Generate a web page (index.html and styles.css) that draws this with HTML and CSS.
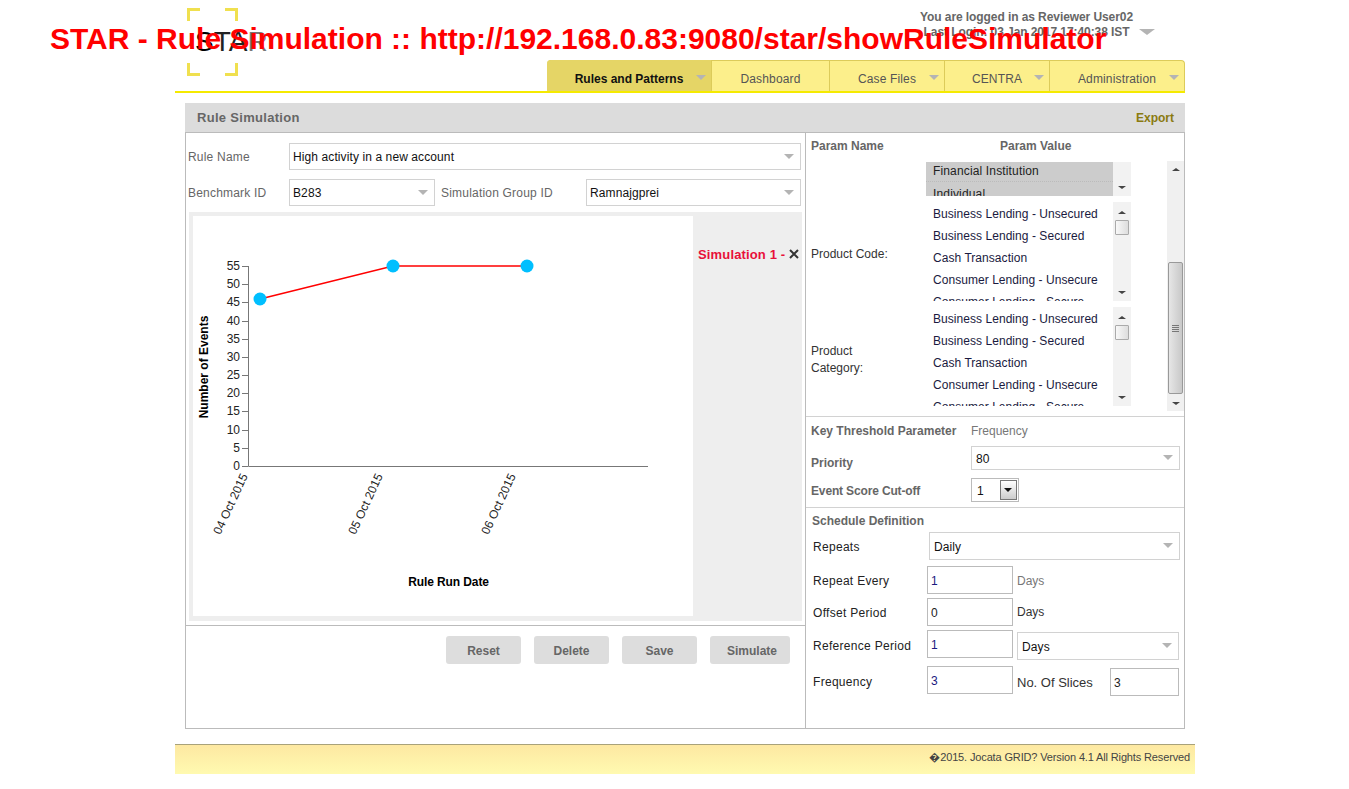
FILE: index.html
```html
<!DOCTYPE html>
<html lang="en">
<head>
<meta charset="UTF-8">
<meta name="viewport" content="width=device-width, initial-scale=1.0">
<title>STAR - Rule Simulation</title>
<link rel="stylesheet" href="styles.css">
</head>
<body>
<h1 class="page-url">STAR - Rule Simulation :: http://192.168.0.83:9080/star/showRuleSimulator</h1>
<div class="page">
  <header class="header">
    <div class="logo"><span class="logo-s">S</span>TA<span class="logo-r">R</span>
      <i class="corner tl"></i><i class="corner tr"></i><i class="corner bl"></i><i class="corner br"></i>
    </div>
    <div class="header-right">
      <div class="user-box">
        <div class="user-info">
          <div>You are logged in as Reviewer User02</div>
          <div class="last-login">Last Login: 03 Jan 2017 17:40:38 IST</div>
        </div>
        <span class="caret caret-big"></span>
      </div>
      <nav class="nav">
        <a class="tab tab-rules active">Rules and Patterns<span class="caret"></span></a>
        <a class="tab tab-dash">Dashboard</a>
        <a class="tab tab-case">Case Files<span class="caret"></span></a>
        <a class="tab tab-centra">CENTRA<span class="caret"></span></a>
        <a class="tab tab-admin">Administration<span class="caret"></span></a>
      </nav>
    </div>
  </header>

  <main class="panel">
    <div class="panel-title">
      <span class="panel-name">Rule Simulation</span>
      <a class="export">Export</a>
    </div>
    <div class="panel-body">
      <section class="left">
        <div class="form-row row-rule">
          <label class="lbl lbl-rule">Rule Name</label>
          <div class="select grow">High activity in a new account<span class="caret"></span></div>
        </div>
        <div class="form-row row-bench">
          <label class="lbl lbl-rule">Benchmark ID</label>
          <div class="select sel-bench">B283<span class="caret"></span></div>
          <label class="lbl lbl-group">Simulation Group ID</label>
          <div class="select grow">Ramnajgprei<span class="caret"></span></div>
        </div>
        <div class="chart-frame">
          <div class="chart">
            <svg width="500" height="400" viewBox="193 216 500 400">
              <g class="axis">
                <path d="M248.5 266V466.5H648"/>
                <path d="M242 266.5h6M242 284.5h6M242 302.5h6M242 321.5h6M242 339.5h6M242 357.5h6M242 375.5h6M242 393.5h6M242 411.5h6M242 430.5h6M242 448.5h6M242 466.5h6"/>
              </g>
              <g class="tick-labels">
                <text x="240" y="270">55</text>
                <text x="240" y="288">50</text>
                <text x="240" y="306">45</text>
                <text x="240" y="325">40</text>
                <text x="240" y="343">35</text>
                <text x="240" y="361">30</text>
                <text x="240" y="379">25</text>
                <text x="240" y="397">20</text>
                <text x="240" y="415">15</text>
                <text x="240" y="434">10</text>
                <text x="240" y="452">5</text>
                <text x="240" y="470">0</text>
              </g>
              <g class="date-labels">
                <text transform="translate(248 476) rotate(-65)">04 Oct 2015</text>
                <text transform="translate(383 476) rotate(-65)">05 Oct 2015</text>
                <text transform="translate(516 476) rotate(-65)">06 Oct 2015</text>
              </g>
              <text class="axis-title" transform="translate(208 367) rotate(-90)">Number of Events</text>
              <text class="axis-title title-x" x="448.5" y="586">Rule Run Date</text>
              <polyline class="series" points="260,299 393,266 527,266"/>
              <circle class="point" cx="260" cy="299" r="6.5"/>
              <circle class="point" cx="393" cy="266" r="6.5"/>
              <circle class="point" cx="527" cy="266" r="6.5"/>
            </svg>
          </div>
          <div class="legend">
            <span class="legend-name">Simulation 1 -</span>
            <svg class="legend-x" width="10" height="10" viewBox="0 0 10 10"><path d="M1 1l8 8M9 1l-8 8"/></svg>
          </div>
        </div>
        <div class="actions">
          <button class="btn">Reset</button>
          <button class="btn">Delete</button>
          <button class="btn">Save</button>
          <button class="btn btn-wide">Simulate</button>
        </div>
      </section>

      <section class="right">
        <div class="param-head">
          <span class="param-name">Param Name</span>
          <span>Param Value</span>
        </div>
        <div class="param-scroll">
          <div class="param-rows">
            <div class="param-row first">
              <div class="listbox short">
                <ul class="options">
                  <li class="selected">Financial Institution</li>
                  <li class="selected">Individual</li>
                </ul>
                <div class="sb plain"><span></span><span class="down"></span></div>
              </div>
            </div>
            <div class="param-row">
              <label class="param-label">Product Code:</label>
              <div class="listbox">
                <ul class="options">
                  <li>Business Lending - Unsecured</li>
                  <li>Business Lending - Secured</li>
                  <li>Cash Transaction</li>
                  <li>Consumer Lending - Unsecure</li>
                  <li>Consumer Lending - Secure</li>
                </ul>
                <div class="sb"><span class="up"></span><b class="thumb"></b><span class="down"></span></div>
              </div>
            </div>
            <div class="param-row">
              <label class="param-label">Product<br>Category:</label>
              <div class="listbox">
                <ul class="options">
                  <li>Business Lending - Unsecured</li>
                  <li>Business Lending - Secured</li>
                  <li>Cash Transaction</li>
                  <li>Consumer Lending - Unsecure</li>
                  <li>Consumer Lending - Secure</li>
                </ul>
                <div class="sb"><span class="up"></span><b class="thumb"></b><span class="down"></span></div>
              </div>
            </div>
          </div>
          <div class="outer-sb">
            <span class="up"></span>
            <div class="outer-track"><b class="outer-thumb"><i></i></b></div>
            <span class="down"></span>
          </div>
        </div>

        <div class="threshold">
          <div class="t-row t-key"><span class="t-label">Key Threshold Parameter</span><span class="t-value">Frequency</span></div>
          <div class="t-row t-priority"><span class="t-label">Priority</span><div class="select sel-priority">80<span class="caret"></span></div></div>
          <div class="t-row t-score"><span class="t-label">Event Score Cut-off</span>
            <div class="old-select">1<span class="old-btn"></span></div>
          </div>
        </div>

        <div class="schedule">
          <h3 class="sched-title">Schedule Definition</h3>
          <div class="s-row s-repeats"><label class="s-label">Repeats</label><div class="select sel-repeats">Daily<span class="caret"></span></div></div>
          <div class="s-row s-every"><label class="s-label">Repeat Every</label><input class="num" value="1"><span class="unit muted">Days</span></div>
          <div class="s-row s-offset"><label class="s-label">Offset Period</label><input class="num plain-num" value="0"><span class="unit">Days</span></div>
          <div class="s-row s-ref"><label class="s-label">Reference Period</label><input class="num" value="1"><div class="select sel-days">Days<span class="caret"></span></div></div>
          <div class="s-row s-freq"><label class="s-label">Frequency</label><input class="num" value="3"><span class="unit slices">No. Of Slices</span><input class="num num-slices" value="3"></div>
        </div>
      </section>
    </div>
  </main>

  <footer class="footer">&#65533;2015. Jocata GRID? Version 4.1 All Rights Reserved</footer>
</div>
</body>
</html>
```

FILE: styles.css
```css
* {
  box-sizing: border-box;
}
body {
  margin: 0;
  background: #fff;
  color: #333;
  font-family: "Liberation Sans", Arial, sans-serif;
  font-size: 12px;
}
ul {
  margin: 0;
  padding: 0;
  list-style: none;
}
.page-url {
  position: absolute;
  left: 50px;
  top: 20px;
  z-index: 10;
  margin: 0;
  color: #f00;
  font-size: 30px;
  line-height: 38px;
  font-weight: bold;
  white-space: nowrap;
}
.page {
  width: 1020px;
  margin-left: 175px;
}

/* header */
.header {
  display: flex;
  width: 1010px;
  height: 93px;
  border-bottom: 2px solid #f5ea00;
}
.logo {
  position: relative;
  width: 51px;
  height: 68px;
  margin: 8px 0 0 12px;
  padding: 19px 0 0 8px;
  color: #222;
  font-size: 28px;
  font-weight: normal;
  line-height: 30px;
  white-space: nowrap;
}
.logo-s {
  color: #000;
}
.logo-r {
  color: #777;
}
.corner {
  position: absolute;
  width: 13px;
  height: 13px;
  border: 0 solid #f0e04f;
}
.tl { left: 0; top: 0; border-width: 3px 0 0 3px; }
.tr { right: 0; top: 0; border-width: 3px 3px 0 0; }
.bl { left: 0; bottom: 0; border-width: 0 0 3px 3px; }
.br { right: 0; bottom: 0; border-width: 0 3px 3px 0; }
.header-right {
  display: flex;
  flex-direction: column;
  flex: 1;
  align-items: flex-end;
}
.user-box {
  display: flex;
  align-items: flex-start;
  height: 60px;
  padding: 10px 30px 0 0;
}
.user-info {
  color: #666;
  font-weight: bold;
  letter-spacing: -.08px;
  line-height: 15px;
  text-align: center;
}
.caret {
  position: absolute;
  right: 5px;
  top: 50%;
  margin-top: -3px;
  border-style: solid;
  border-width: 5px 5px 0;
  border-color: #b4b4b4 transparent transparent;
}
.caret-big {
  position: static;
  margin: 19px 0 0 6px;
  border-width: 6px 8px 0;
}
.nav {
  display: flex;
  height: 31px;
  border: 1px solid #dccb5a;
  border-bottom: 0;
  border-left: 0;
  border-radius: 4px 4px 0 0;
  background: #fcef8b;
  color: #555;
  line-height: 39px;
  letter-spacing: .15px;
}
.tab {
  position: relative;
  display: block;
  margin-top: -1px;
  border-right: 1px solid #dccb5a;
  text-align: center;
}
.tab:last-child {
  border-right: 0;
}
.tab .caret {
  right: 5px;
  margin-top: -1px;
}
.active {
  border-radius: 4px 0 0 0;
  background: #e5d566;
  color: #111;
  font-weight: bold;
  letter-spacing: 0;
}
.tab-rules { width: 165px; }
.tab-dash { width: 118px; }
.tab-case { width: 115px; }
.tab-centra { width: 105px; }
.tab-admin { width: 134px; }

/* main panel */
.panel {
  width: 1000px;
  margin: 10px 0 0 10px;
}
.panel-title {
  display: flex;
  justify-content: space-between;
  align-items: center;
  height: 30px;
  padding: 0 11px 0 12px;
  border-bottom: 1px solid #bbb;
  background: #dcdcdc;
}
.panel-name {
  color: #666;
  font-size: 13px;
  font-weight: bold;
  letter-spacing: .3px;
}
.export {
  color: #8a7a10;
  font-weight: bold;
}
.panel-body {
  display: flex;
  height: 596px;
  border: 1px solid #bbb;
  border-top: 0;
}
.left {
  width: 620px;
  border-right: 1px solid #bbb;
}
.right {
  width: 378px;
}
.form-row {
  display: flex;
  align-items: center;
  height: 27px;
  margin-right: 4px;
  padding-left: 2px;
}
.row-rule {
  margin-top: 10px;
}
.row-bench {
  margin-top: 9px;
}
.lbl {
  color: #666;
  letter-spacing: .2px;
}
.lbl-rule {
  width: 101px;
  flex: none;
}
.lbl-group {
  width: 151px;
  flex: none;
  padding-left: 6px;
}
.select {
  position: relative;
  height: 27px;
  padding-left: 3px;
  border: 1px solid #d2d2d2;
  background: #fff;
  color: #111;
  line-height: 27px;
  letter-spacing: .1px;
}
.select .caret {
  right: 6px;
}
.grow {
  flex: 1;
}
.sel-bench {
  width: 146px;
  flex: none;
}

/* chart */
.chart-frame {
  display: flex;
  height: 409px;
  margin: 6px 3px 0 3px;
  padding: 4px 0 5px 4px;
  background: #eee;
}
.chart {
  width: 500px;
  height: 400px;
  background: #fff;
}
.chart svg {
  display: block;
}
.axis path {
  fill: none;
  stroke: #777;
  stroke-width: 1;
}
.tick-labels text {
  fill: #222;
  font-size: 12px;
  text-anchor: end;
}
.date-labels text {
  fill: #222;
  font-size: 12px;
  text-anchor: end;
}
.axis-title {
  fill: #000;
  font-size: 12px;
  font-weight: bold;
  text-anchor: middle;
}
.title-x {
  letter-spacing: -.1px;
}
.series {
  fill: none;
  stroke: #f00;
  stroke-width: 1.5;
}
.point {
  fill: #00bfff;
}
.legend {
  display: flex;
  flex: 1;
  align-items: center;
  height: 20px;
  margin-top: 28px;
  padding-left: 5px;
}
.legend-name {
  color: #e8103a;
  font-size: 13px;
  font-weight: bold;
  letter-spacing: .15px;
  white-space: nowrap;
}
.legend-x {
  margin-left: 4px;
}
.legend-x path {
  fill: none;
  stroke: #333;
  stroke-width: 2;
}
.actions {
  display: flex;
  justify-content: flex-end;
  gap: 13px;
  margin-top: 4px;
  padding: 10px 15px 0 0;
  border-top: 1px solid #bbb;
}
.btn {
  width: 75px;
  height: 28px;
  padding: 2px 0 0;
  border: 0;
  border-radius: 3px;
  background: #ddd;
  color: #666;
  font-family: inherit;
  font-size: 12px;
  font-weight: bold;
}
.btn-wide {
  width: 80px;
  padding-left: 4px;
}

/* param lists */
.param-head {
  display: flex;
  height: 28px;
  padding: 6px 0 0 5px;
  color: #666;
  font-weight: bold;
  line-height: 14px;
}
.param-name {
  width: 189px;
}
.param-scroll {
  display: flex;
  height: 251px;
  padding-bottom: 1px;
}
.param-rows {
  width: 361px;
  flex: none;
}
.param-row {
  display: flex;
  align-items: center;
  margin-top: 6px;
  padding-left: 5px;
}
.param-row.first {
  margin-top: 1px;
  padding-left: 120px;
}
.param-label {
  width: 115px;
  flex: none;
  padding-top: 6px;
  color: #333;
  line-height: 17px;
}
.listbox {
  display: flex;
  width: 205px;
  height: 99px;
  overflow: hidden;
  background: #fff;
}
.listbox.short {
  height: 34px;
}
.options {
  flex: 1;
  padding-top: 1px;
  overflow: hidden;
}
.options li {
  height: 22px;
  padding-left: 7px;
  color: #1a1a40;
  line-height: 22px;
  letter-spacing: .05px;
  white-space: nowrap;
  overflow: hidden;
}
.short .options {
  padding-top: 0;
}
.options .selected {
  height: 20px;
  background: #ccc;
  color: #222;
  letter-spacing: .15px;
  line-height: 18px;
  border-bottom: 1px dotted #bbb;
}
.options .selected + .selected {
  height: 22px;
  border-bottom: 0;
  line-height: 24px;
}
.sb {
  position: relative;
  display: flex;
  flex-direction: column;
  justify-content: space-between;
  width: 18px;
  flex: none;
  padding: 9px 0 7px;
  background: #f2f2f2;
}
.up, .down {
  align-self: center;
  display: block;
  width: 0;
  border-style: solid;
  border-color: #444 transparent;
}
.up {
  border-width: 0 4px 3px;
}
.down {
  border-width: 3px 4px 0;
}
.thumb {
  position: absolute;
  left: 2px;
  top: 18px;
  width: 14px;
  height: 15px;
  border: 1px solid #aaa;
  border-radius: 1px;
  background: linear-gradient(to right, #f8f8f8, #ddd);
}
.outer-sb {
  display: flex;
  flex-direction: column;
  width: 17px;
  padding-top: 7px;
  background: #f0f0f0;
}
.outer-sb .up {
  flex: none;
}
.outer-track {
  flex: 1;
  margin: 0 1px;
  padding-top: 91px;
}
.outer-thumb {
  display: flex;
  justify-content: center;
  align-items: center;
  height: 132px;
  border: 1px solid #999;
  border-radius: 2px;
  background: linear-gradient(to right, #e6e6e6, #c8c8c8);
}
.outer-thumb i {
  display: block;
  width: 7px;
  height: 7px;
  background: repeating-linear-gradient(#777 0 1px, transparent 1px 2px);
}
.outer-sb .down {
  flex: none;
  margin: 3px 0 6px;
}

/* threshold */
.threshold {
  height: 92px;
  border-top: 1px solid #d2d2d2;
  border-bottom: 1px solid #d2d2d2;
  margin-top: 4px;
}
.t-row {
  display: flex;
  align-items: center;
  padding-left: 5px;
}
.t-label {
  width: 160px;
  flex: none;
  color: #666;
  font-weight: bold;
}
.t-key {
  height: 14px;
  margin-top: 7px;
}
.t-value {
  color: #777;
}
.t-priority {
  height: 24px;
  margin-top: 8px;
}
.t-priority .t-label {
  padding-top: 10px;
}
.sel-priority {
  width: 209px;
  height: 24px;
  padding-left: 4px;
  line-height: 24px;
}
.t-score {
  height: 24px;
  margin-top: 8px;
}
.t-score .t-label {
  padding-top: 2px;
  letter-spacing: -.15px;
}
.old-select {
  position: relative;
  width: 48px;
  height: 24px;
  padding-left: 5px;
  border: 1px solid #bbb;
  color: #111;
  line-height: 24px;
}
.old-btn {
  position: absolute;
  right: 1px;
  top: 1px;
  bottom: 1px;
  width: 17px;
  border: 1px solid #777;
  background: linear-gradient(#fff, #ccc);
}
.old-btn::after {
  content: "";
  position: absolute;
  left: 3px;
  top: 7px;
  border-style: solid;
  border-width: 4px 4px 0;
  border-color: #111 transparent transparent;
}

/* schedule */
.sched-title {
  height: 14px;
  margin: 6px 0 0 6px;
  color: #666;
  font-size: 12px;
  font-weight: bold;
  line-height: 14px;
}
.s-row {
  display: flex;
  align-items: center;
  height: 28px;
  padding-left: 7px;
}
.s-label {
  width: 114px;
  flex: none;
  padding-top: 2px;
  color: #222;
  letter-spacing: .3px;
}
.s-repeats {
  margin-top: 4px;
}
.s-repeats .s-label {
  width: 116px;
}
.sel-repeats {
  width: 251px;
  height: 28px;
  padding-left: 4px;
  line-height: 28px;
}
.num {
  width: 86px;
  height: 28px;
  padding: 1px 0 0 3px;
  border: 1px solid #bbb;
  border-radius: 0;
  outline: 0;
  background: #fff;
  color: #1a1a80;
  font-family: inherit;
  font-size: 12px;
}
.plain-num {
  color: #222;
}
.unit {
  margin-left: 4px;
  color: #333;
}
.muted {
  padding-top: 2px;
  color: #777;
}
.s-every {
  margin-top: 6px;
}
.s-offset {
  margin-top: 4px;
}
.s-ref {
  margin-top: 4px;
}
.s-ref .s-label,
.s-freq .s-label {
  padding-top: 4px;
}
.sel-days {
  width: 162px;
  height: 28px;
  margin: 4px 0 0 4px;
  padding-left: 4px;
  line-height: 28px;
}
.s-freq {
  margin-top: 8px;
}
.slices {
  width: 93px;
  flex: none;
  padding-top: 4px;
  font-size: 13px;
}
.num-slices {
  width: 69px;
  margin-top: 4px;
  color: #222;
}

/* footer */
.footer {
  height: 30px;
  margin-top: 15px;
  padding-right: 5px;
  border-top: 1px solid #a8a27a;
  background: linear-gradient(#fde8a2, #fffab0);
  color: #444;
  font-size: 11px;
  line-height: 25px;
  letter-spacing: -.14px;
  text-align: right;
}
```
